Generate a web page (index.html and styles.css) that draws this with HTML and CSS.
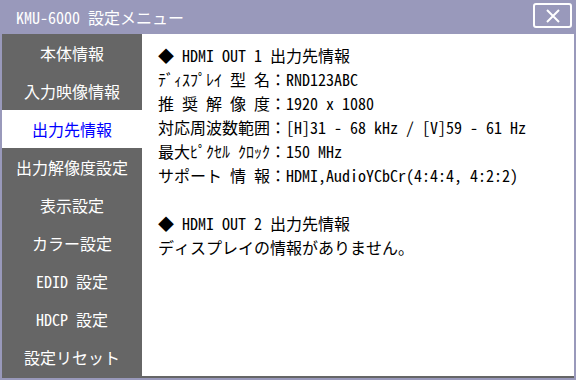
FILE: index.html
```html
<!DOCTYPE html>
<html lang="ja">
<head>
<meta charset="utf-8">
<title>KMU-6000 設定メニュー</title>
<link rel="stylesheet" href="styles.css">
</head>
<body>
<div class="window">
  <header class="titlebar">
    <span class="title">KMU-6000 設定メニュー</span>
    <button class="close" aria-label="閉じる">
      <svg width="16" height="14" viewBox="0 0 16 14"><path d="M2 1 L14 13 M14 1 L2 13" stroke="#fff" stroke-width="2" fill="none"/></svg>
    </button>
  </header>
  <div class="body">
    <nav class="sidebar">
      <div class="item">本体情報</div>
      <div class="item">入力映像情報</div>
      <div class="item active">出力先情報</div>
      <div class="item">出力解像度設定</div>
      <div class="item">表示設定</div>
      <div class="item">カラー設定</div>
      <div class="item">EDID 設定</div>
      <div class="item">HDCP 設定</div>
      <div class="item">設定リセット</div>
    </nav>
    <main class="content">
      <div class="line">◆ HDMI OUT 1 出力先情報</div>
      <div class="line">ﾃﾞｨｽﾌﾟﾚｲ 型 名：RND123ABC</div>
      <div class="line">推 奨 解 像 度：1920 x 1080</div>
      <div class="line">対応周波数範囲：[H]31 - 68 kHz / [V]59 - 61 Hz</div>
      <div class="line">最大ﾋﾟｸｾﾙ ｸﾛｯｸ：150 MHz</div>
      <div class="line">サポート 情 報：HDMI,AudioYCbCr(4:4:4, 4:2:2)</div>
      <div class="line blank"></div>
      <div class="line">◆ HDMI OUT 2 出力先情報</div>
      <div class="line">ディスプレイの情報がありません。</div>
    </main>
  </div>
</div>
</body>
</html>
```

FILE: styles.css
```css
html, body {
  margin: 0;
  padding: 0;
  background: #9999bb;
  width: 576px;
  height: 380px;
  overflow: hidden;
  font-family: "Noto Sans Mono CJK JP", "Noto Sans CJK JP", monospace;
  font-size: 16px;
}

.window {
  display: flex;
  flex-direction: column;
}

.titlebar {
  height: 34px;
  display: flex;
  align-items: center;
  justify-content: space-between;
  padding: 0 4px 0 16px;
  box-sizing: border-box;
}

.title {
  color: #ffffff;
  font-size: 16px;
  line-height: 20px;
  white-space: pre;
}

.close {
  width: 39px;
  height: 25px;
  margin-top: -3px;
  border: 2px solid #ffffff;
  border-radius: 3px;
  background: transparent;
  padding: 0;
  display: flex;
  align-items: center;
  justify-content: center;
  box-sizing: border-box;
}

.body {
  display: flex;
  margin-left: 2px;
  width: 572px;
  background: #666666;
  padding-bottom: 2px;
}

.sidebar {
  width: 140px;
  background: #666666;
  display: flex;
  flex-direction: column;
}

.item {
  height: 38px;
  display: flex;
  align-items: center;
  justify-content: center;
  color: #ffffff;
  white-space: pre;
}

.item.active {
  background: #ffffff;
  color: #0000ff;
}

.content {
  flex: 1;
  background: #ffffff;
  padding: 9px 0 0 16px;
  color: #000000;
}

.line {
  height: 24px;
  line-height: 24px;
  white-space: pre;
}
```
